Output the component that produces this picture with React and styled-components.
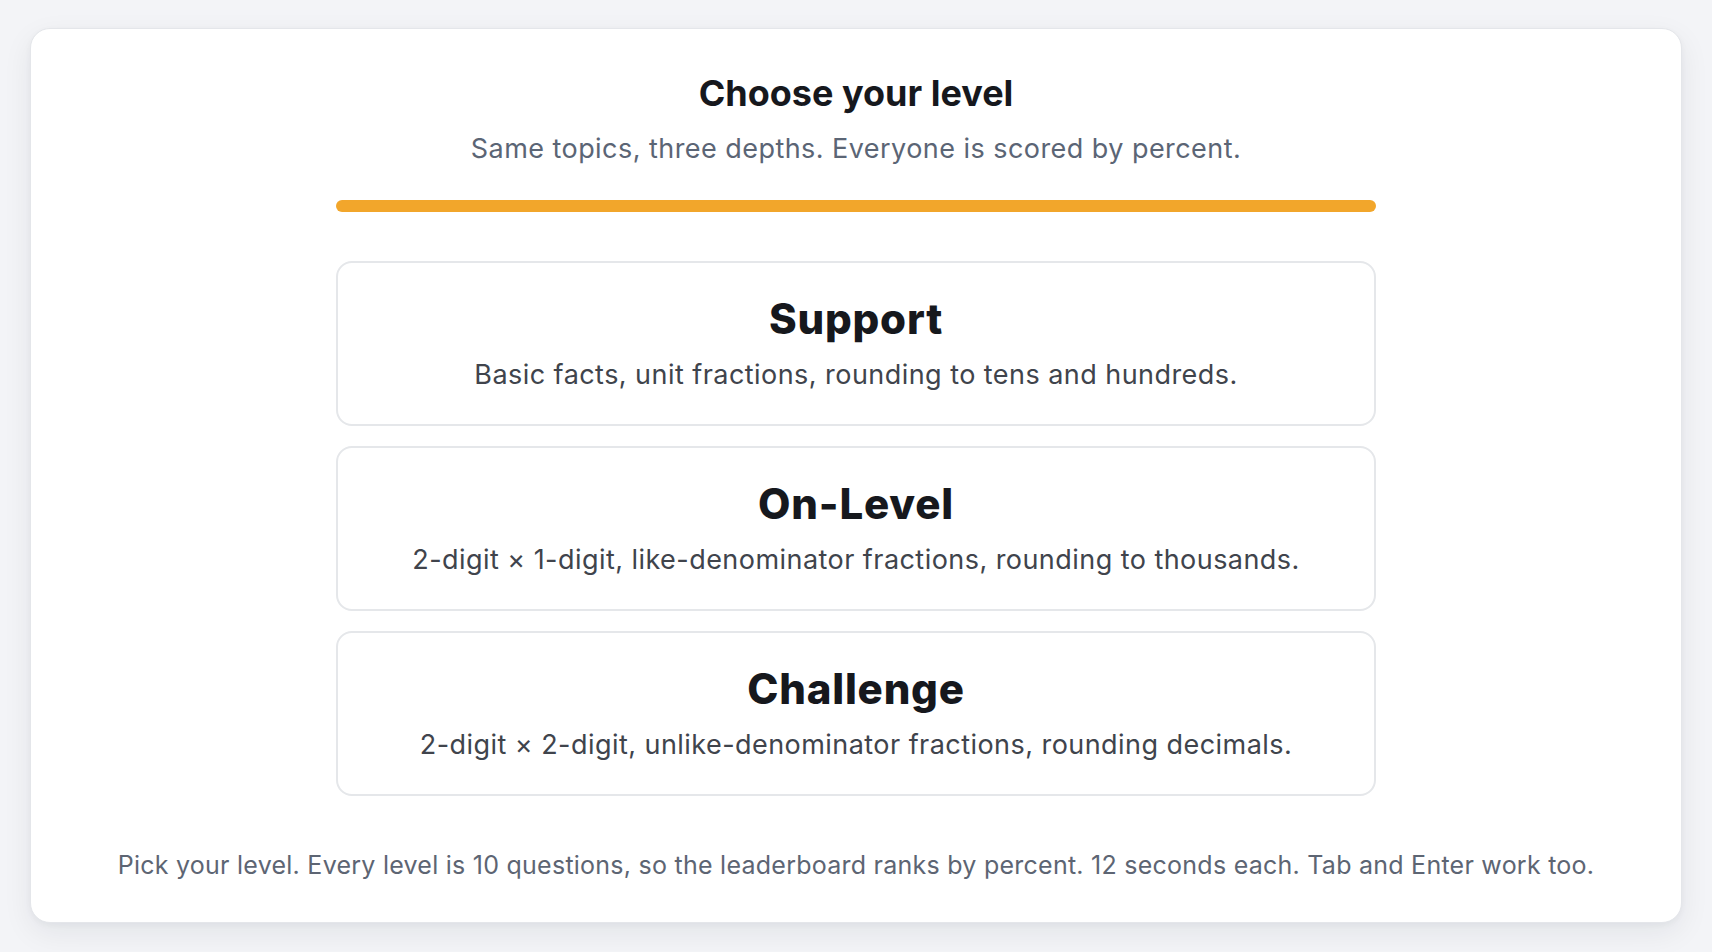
import React from "react";
import styled, { createGlobalStyle } from "styled-components";

const GlobalStyle = createGlobalStyle`
  * {
    box-sizing: border-box;
  }

  body {
    margin: 0;
    background: #f3f4f7;
    font-family: Inter, "Noto Sans", "Liberation Sans", sans-serif;
    color: #16181d;
  }
`;

const Page = styled.div`
  min-height: 100vh;
  padding: 28px 30px 29px;
  display: flex;
`;

const Panel = styled.main`
  flex: 1;
  background: #ffffff;
  border: 1px solid #e4e6ea;
  border-radius: 20px;
  box-shadow: 0 10px 30px rgba(20, 28, 45, 0.07), 0 2px 6px rgba(20, 28, 45, 0.04);
  padding: 44px 40px 40px;
  display: flex;
  flex-direction: column;
  align-items: center;
`;

const Title = styled.h1`
  margin: 0;
  font-size: 36px;
  line-height: 41px;
  font-weight: 700;
  color: #16181d;
`;

const Subtitle = styled.p`
  margin: 18px 0 0;
  font-size: 27px;
  line-height: 34px;
  letter-spacing: 0.45px;
  color: #5b6575;
`;

const Progress = styled.div`
  width: 1040px;
  height: 12px;
  margin-top: 34px;
  border-radius: 6px;
  background: #f2a62b;
`;

const LevelList = styled.div`
  width: 1040px;
  margin-top: 49px;
  display: flex;
  flex-direction: column;
  gap: 20px;
`;

const LevelCard = styled.button`
  display: flex;
  flex-direction: column;
  align-items: center;
  width: 100%;
  height: 165px;
  padding: 32px 24px 0;
  background: #ffffff;
  border: 2px solid #e5e7ea;
  border-radius: 16px;
  font-family: inherit;
  cursor: pointer;
`;

const LevelName = styled.span`
  font-size: 42px;
  line-height: 48px;
  font-weight: 800;
  letter-spacing: 0.8px;
  color: #16181d;
`;

const LevelInfo = styled.span`
  margin-top: 15px;
  font-size: 27px;
  line-height: 34px;
  letter-spacing: 0.45px;
  color: #40444c;
`;

const Hint = styled.p`
  margin: 54px 0 0;
  font-size: 25px;
  line-height: 31px;
  letter-spacing: 0.25px;
  color: #5d6573;
`;

const levels = [
  { name: "Support", info: "Basic facts, unit fractions, rounding to tens and hundreds." },
  { name: "On-Level", info: "2-digit × 1-digit, like-denominator fractions, rounding to thousands." },
  { name: "Challenge", info: "2-digit × 2-digit, unlike-denominator fractions, rounding decimals." },
];

export default function App() {
  return (
    <>
      <GlobalStyle />
      <Page>
        <Panel>
          <Title>Choose your level</Title>
          <Subtitle>Same topics, three depths. Everyone is scored by percent.</Subtitle>
          <Progress />
          <LevelList>
            {levels.map((level) => (
              <LevelCard key={level.name} type="button">
                <LevelName>{level.name}</LevelName>
                <LevelInfo>{level.info}</LevelInfo>
              </LevelCard>
            ))}
          </LevelList>
          <Hint>
            Pick your level. Every level is 10 questions, so the leaderboard ranks by percent. 12
            seconds each. Tab and Enter work too.
          </Hint>
        </Panel>
      </Page>
    </>
  );
}
